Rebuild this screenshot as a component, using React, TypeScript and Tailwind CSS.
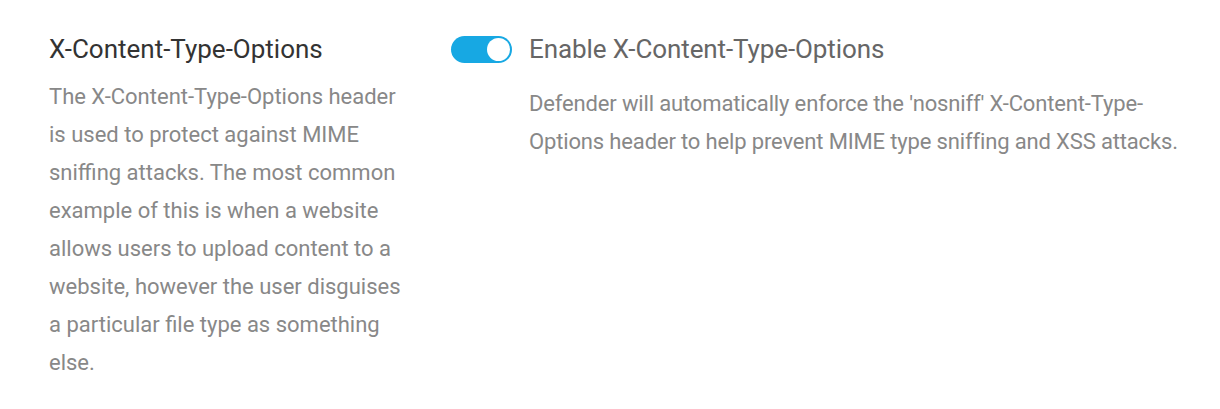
import React, { useState } from "react";

export default function App() {
  const [enabled, setEnabled] = useState(true);

  return (
    <div className="min-h-[409px] bg-white font-['Roboto',sans-serif]">
      <div className="flex px-[49px] pt-[33px]">
        <div className="w-[352px] shrink-0">
          <h3 className="text-[26px] leading-[32px] text-[#333]">X-Content-Type-Options</h3>
          <p className="mt-[13px] text-[22px] leading-[38px] text-[#888]">
            The X-Content-Type-Options header is used to protect against MIME sniffing attacks. The most common example
            of this is when a website allows users to upload content to a website, however the user disguises a
            particular file type as something else.
          </p>
        </div>
        <div className="ml-[50px] flex-1">
          <div className="flex items-center gap-[17px]">
            <button
              onClick={() => setEnabled((v) => !v)}
              className={`flex h-[27px] w-[61px] items-center rounded-full px-[2px] ${enabled ? "justify-end bg-[#17a8e3]" : "justify-start bg-[#e6e6e6]"}`}
            >
              <span className="block h-[23px] w-[23px] rounded-full bg-white" />
            </button>
            <span className="text-[26px] leading-[32px] tracking-[-0.1px] text-[#666]">Enable X-Content-Type-Options</span>
          </div>
          <p className="mt-[20px] whitespace-nowrap pl-[78px] text-[22px] leading-[38px] tracking-[-0.15px] text-[#888]">
            Defender will automatically enforce the 'nosniff' X-Content-Type-
            <br />
            Options header to help prevent MIME type sniffing and XSS attacks.
          </p>
        </div>
      </div>
    </div>
  );
}
